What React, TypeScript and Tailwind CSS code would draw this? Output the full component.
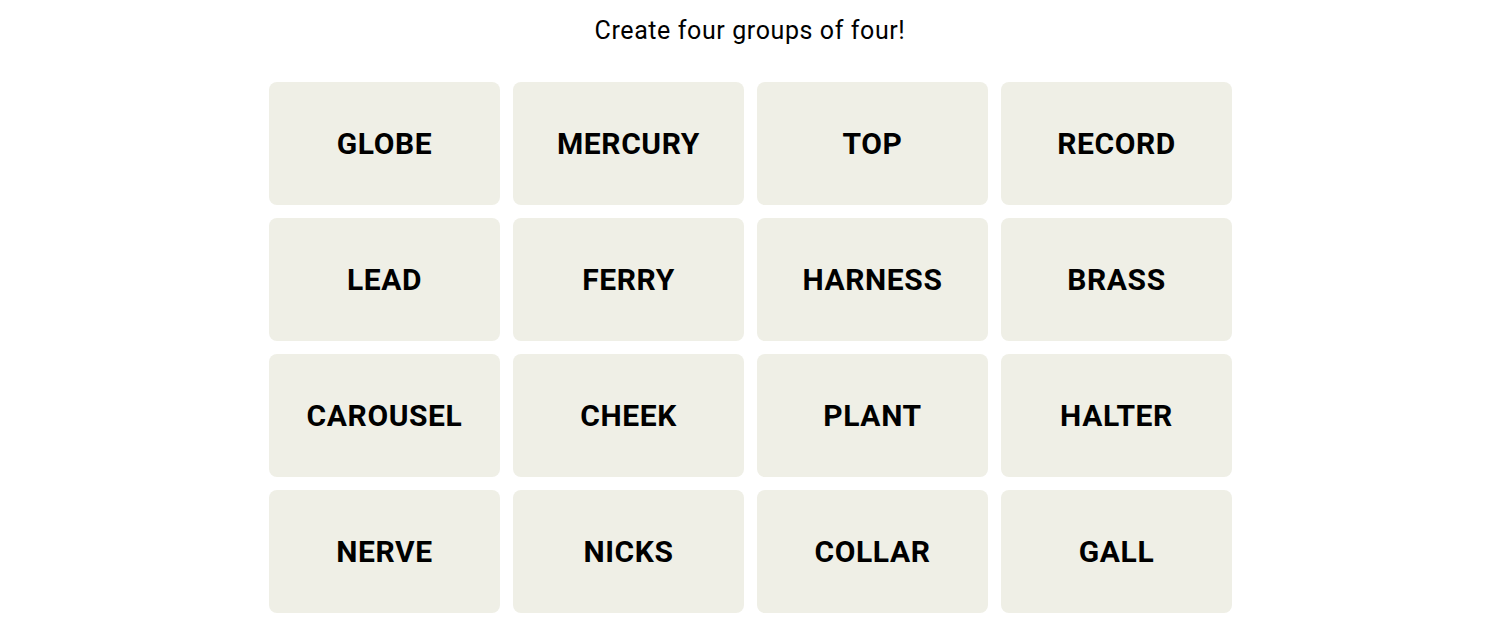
import React from "react";

const words = [
  "GLOBE", "MERCURY", "TOP", "RECORD",
  "LEAD", "FERRY", "HARNESS", "BRASS",
  "CAROUSEL", "CHEEK", "PLANT", "HALTER",
  "NERVE", "NICKS", "COLLAR", "GALL",
];

export default function App() {
  return (
    <div className="w-[1500px] h-[633px] bg-white flex flex-col items-center" style={{ fontFamily: "Roboto, 'Liberation Sans', sans-serif" }}>
      <p className="mt-[14px] h-[34px] leading-[34px] text-[25px] tracking-[0.6px] text-black">Create four groups of four!</p>
      <div className="mt-[34px] grid grid-cols-[repeat(4,231px)] auto-rows-[123px] gap-[13px] ml-[1px]">
        {words.map((w) => (
          <div key={w} className="bg-[#efefe6] rounded-[8px] flex items-center justify-center">
            <span className="text-[30px] font-bold text-black tracking-[0.6px]">{w}</span>
          </div>
        ))}
      </div>
    </div>
  );
}
